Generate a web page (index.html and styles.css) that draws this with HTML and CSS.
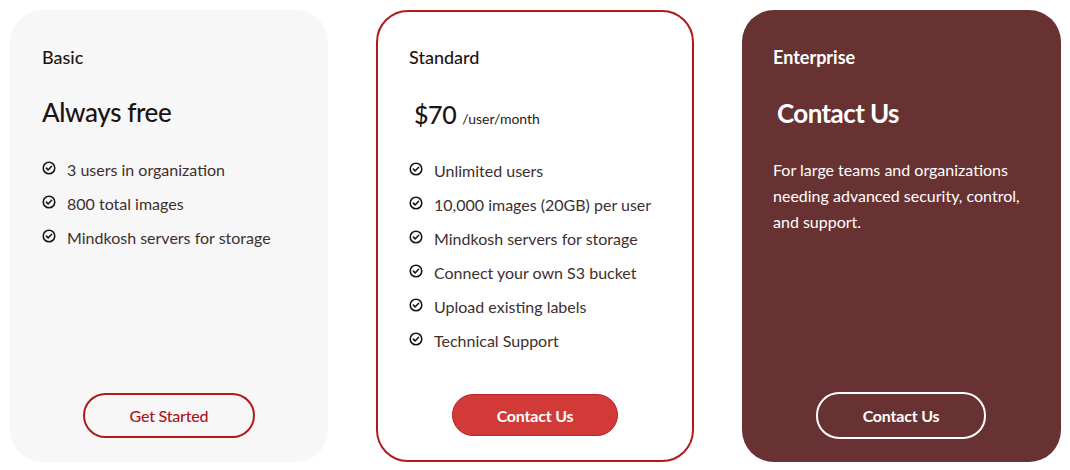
FILE: index.html
```html
<!DOCTYPE html>
<html>
<head>
<meta charset="utf-8">
<link rel="stylesheet" href="styles.css">
</head>
<body>
<div class="plans">
  <div class="card basic">
    <div class="tier">Basic</div>
    <div class="price">Always free</div>
    <ul class="features">
      <li><svg class="chk" viewBox="0 0 16 16"><circle cx="8" cy="8" r="6.6"/><path d="M5 8.2l2 2 4-4.2"/></svg>3 users in organization</li>
      <li><svg class="chk" viewBox="0 0 16 16"><circle cx="8" cy="8" r="6.6"/><path d="M5 8.2l2 2 4-4.2"/></svg>800 total images</li>
      <li><svg class="chk" viewBox="0 0 16 16"><circle cx="8" cy="8" r="6.6"/><path d="M5 8.2l2 2 4-4.2"/></svg>Mindkosh servers for storage</li>
    </ul>
    <a class="btn btn-outline-red">Get Started</a>
  </div>
  <div class="card standard">
    <div class="tier">Standard</div>
    <div class="price amount">$70 <span class="per">/user/month</span></div>
    <ul class="features">
      <li><svg class="chk" viewBox="0 0 16 16"><circle cx="8" cy="8" r="6.6"/><path d="M5 8.2l2 2 4-4.2"/></svg>Unlimited users</li>
      <li><svg class="chk" viewBox="0 0 16 16"><circle cx="8" cy="8" r="6.6"/><path d="M5 8.2l2 2 4-4.2"/></svg>10,000 images (20GB) per user</li>
      <li><svg class="chk" viewBox="0 0 16 16"><circle cx="8" cy="8" r="6.6"/><path d="M5 8.2l2 2 4-4.2"/></svg>Mindkosh servers for storage</li>
      <li><svg class="chk" viewBox="0 0 16 16"><circle cx="8" cy="8" r="6.6"/><path d="M5 8.2l2 2 4-4.2"/></svg>Connect your own S3 bucket</li>
      <li><svg class="chk" viewBox="0 0 16 16"><circle cx="8" cy="8" r="6.6"/><path d="M5 8.2l2 2 4-4.2"/></svg>Upload existing labels</li>
      <li><svg class="chk" viewBox="0 0 16 16"><circle cx="8" cy="8" r="6.6"/><path d="M5 8.2l2 2 4-4.2"/></svg>Technical Support</li>
    </ul>
    <a class="btn btn-filled">Contact Us</a>
  </div>
  <div class="card enterprise">
    <div class="tier">Enterprise</div>
    <div class="price contact">Contact Us</div>
    <p class="desc">For large teams and organizations needing advanced security, control, and support.</p>
    <a class="btn btn-outline-white">Contact Us</a>
  </div>
</div>
</body>
</html>
```

FILE: styles.css
```css
html, body {
  margin: 0;
  padding: 0;
  background: #ffffff;
}
body {
  font-family: "Lato", "Liberation Sans", sans-serif;
  color: #1c1414;
}
.plans {
  display: flex;
  gap: 48px;
  padding: 10px 0 0 10px;
}
.card {
  box-sizing: border-box;
  width: 318px;
  height: 452px;
  border-radius: 32px;
  padding: 36px 32px 24px 32px;
  display: flex;
  flex-direction: column;
}
.basic {
  background: #f7f7f7;
}
.standard {
  background: #ffffff;
  border: 2px solid #b3181c;
  padding: 34px 31px 23px 31px;
}
.enterprise {
  background: #683232;
  color: #ffffff;
  width: 319px;
  padding: 36px 32px 23px 31px;
}
.tier {
  font-size: 18px;
  line-height: 22px;
  font-weight: 500;
}
.enterprise .tier {
  font-weight: 700;
}
.price {
  margin-top: 27px;
  font-size: 26px;
  line-height: 34px;
  font-weight: 500;
  letter-spacing: -0.4px;
}
.amount {
  margin-left: 5px;
  margin-top: 29px;
  font-size: 25px;
}
.per {
  font-size: 14px;
  font-weight: 400;
  letter-spacing: 0;
  color: #2a2020;
}
.contact {
  margin-left: 4px;
  font-weight: 700;
  margin-top: 28px;
  letter-spacing: -0.6px;
}
.features {
  list-style: none;
  margin: 23px 0 0 0;
  padding: 0;
}
.standard .features {
  margin-top: 17px;
}
.features li {
  display: flex;
  align-items: center;
  height: 34px;
  font-size: 16px;
  color: #3e2f2f;
}
.chk {
  width: 14px;
  height: 14px;
  margin-right: 11px;
  margin-top: -3px;
  fill: none;
  stroke: #1c1414;
  stroke-width: 1.8;
  stroke-linecap: round;
  stroke-linejoin: round;
  flex: none;
}
.desc {
  margin: 27px 0 0 0;
  font-size: 16px;
  line-height: 26px;
}
.btn {
  box-sizing: border-box;
  margin-top: auto;
  align-self: center;
  display: flex;
  align-items: center;
  justify-content: center;
  height: 45px;
  border-radius: 23px;
  font-size: 16px;
  font-weight: 500;
  letter-spacing: -0.2px;
}
.btn-outline-red {
  width: 172px;
  border: 2px solid #b3181c;
  color: #a8161a;
}
.btn-filled {
  width: 166px;
  height: 42px;
  background: #d13a37;
  color: #ffffff;
  font-weight: 700;
  border: 1px solid #b5262a;
  margin-bottom: 1px;
}
.btn-outline-white {
  width: 170px;
  height: 47px;
  border: 2px solid #ffffff;
  color: #ffffff;
  font-weight: 700;
}
```
